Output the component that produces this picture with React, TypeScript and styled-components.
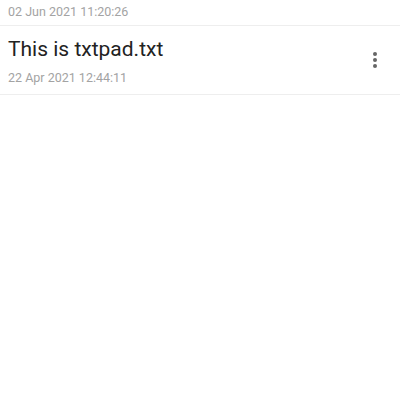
import React, { FunctionComponent } from 'react';
import styled, { createGlobalStyle } from 'styled-components';

const GlobalStyle = createGlobalStyle`
  html, body {
    margin: 0;
    padding: 0;
    background: #ffffff;
    font-family: Roboto, "Noto Sans", sans-serif;
  }
`;

const Screen = styled.div`
  width: 400px;
  height: 400px;
  overflow: hidden;
  background: #ffffff;
`;

const FileList = styled.ul`
  list-style: none;
  margin: 0;
  padding: 0;
`;

// $clipped: the row scrolled mostly out of view, only its date is left
const FileRow = styled.li<{ $clipped?: boolean }>`
  box-sizing: border-box;
  display: flex;
  align-items: flex-start;
  height: ${(p) => (p.$clipped ? '26px' : '69px')};
  padding: ${(p) => (p.$clipped ? '4px 8px 0 8px' : '12px 8px 0 8px')};
  border-bottom: 1px solid #eeeeee;
`;

const FileInfo = styled.div`
  flex: 1;
  display: flex;
  flex-direction: column;
`;

const FileName = styled.span`
  font-size: 21px;
  line-height: 23px;
  color: #222222;
  margin-bottom: 9px;
`;

const FileDate = styled.span`
  font-size: 12.5px;
  line-height: 15px;
  color: #a3a3a3;
`;

const MenuButton = styled.button`
  display: flex;
  align-items: center;
  justify-content: center;
  width: 24px;
  height: 24px;
  padding: 0;
  margin: 10px 5px 0 0;
  border: none;
  background: transparent;
`;

interface FileItem {
  name?: string;
  date: string;
}

const files: FileItem[] = [
  { date: '02 Jun 2021 11:20:26' },
  { name: 'This is txtpad.txt', date: '22 Apr 2021 12:44:11' },
];

const MoreIcon = () => (
  <svg width="6" height="18" viewBox="0 0 6 18">
    <circle cx="3" cy="3" r="2" fill="#666666" />
    <circle cx="3" cy="9" r="2" fill="#666666" />
    <circle cx="3" cy="15" r="2" fill="#666666" />
  </svg>
);

const App: FunctionComponent = () => {
  return (
    <Screen>
      <GlobalStyle />
      <FileList>
        {files.map((file) => (
          <FileRow key={file.date} $clipped={!file.name}>
            <FileInfo>
              {file.name && <FileName>{file.name}</FileName>}
              <FileDate>{file.date}</FileDate>
            </FileInfo>
            {file.name && (
              <MenuButton>
                <MoreIcon />
              </MenuButton>
            )}
          </FileRow>
        ))}
      </FileList>
    </Screen>
  );
};

export default App;
